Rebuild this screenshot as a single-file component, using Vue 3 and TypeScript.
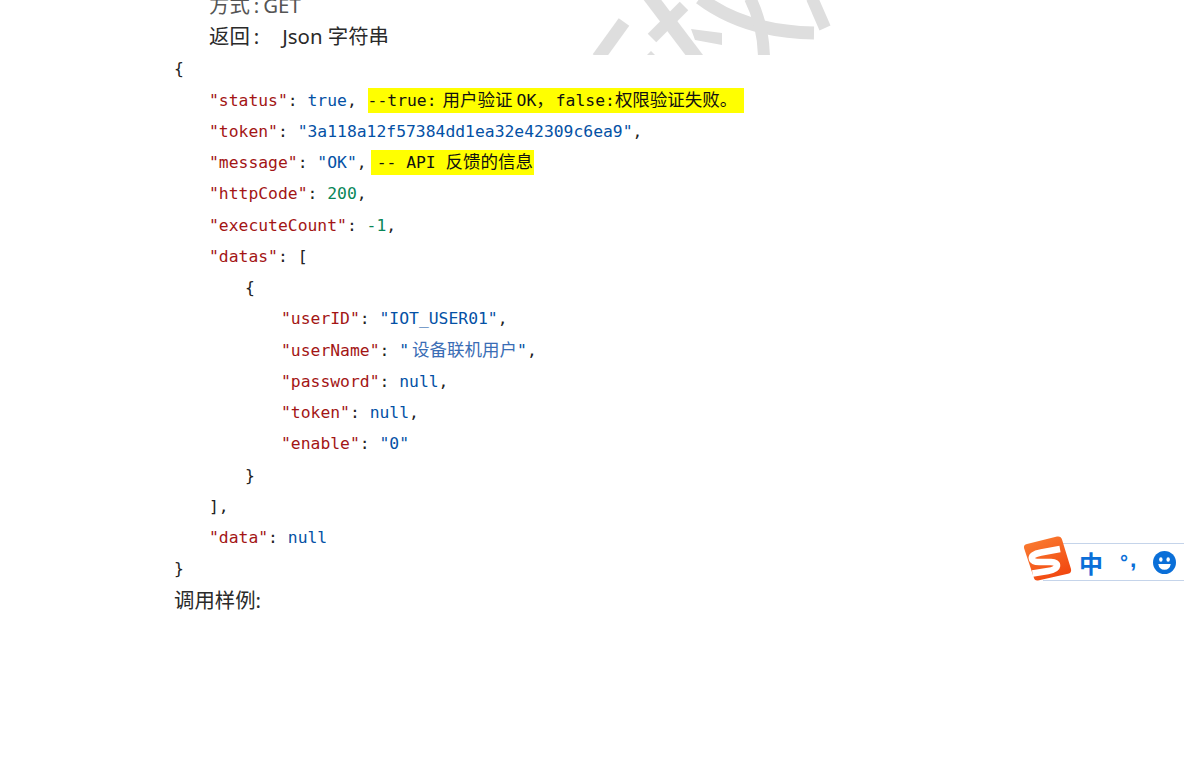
<script setup lang="ts">
type Seg = { t: string; c: string }
type Line = { indent: number; segs: Seg[]; mark?: Seg[]; markClass?: string }
const L = (indent: number, ...segs: [string, string][]): Line => ({
  indent,
  segs: segs.map(([t, c]) => ({ t, c })),
})
const status = L(1, ['"status"', 'k'], [': ', 'p'], ['true', 's'], [', ', 'p'])
status.markClass = 'h1'
status.mark = [
  { t: '--true:', c: '' },
  { t: '用户验证', c: 'cj gap6' },
  { t: 'OK', c: 'gap4' },
  { t: '，', c: 'cj' },
  { t: 'false:', c: 'gap2' },
  { t: '权限验证失败。', c: 'cj' },
]
const message = L(1, ['"message"', 'k'], [': ', 'p'], ['"OK"', 's'], [',', 'p'])
message.markClass = 'h2'
message.mark = [
  { t: '-- API ', c: '' },
  { t: '反馈的信息', c: 'cj' },
]
const lines: Line[] = [
  L(0, ['{', 'p']),
  status,
  L(1, ['"token"', 'k'], [': ', 'p'], ['"3a118a12f57384dd1ea32e42309c6ea9"', 's'], [',', 'p']),
  message,
  L(1, ['"httpCode"', 'k'], [': ', 'p'], ['200', 'n'], [',', 'p']),
  L(1, ['"executeCount"', 'k'], [': ', 'p'], ['-1', 'n'], [',', 'p']),
  L(1, ['"datas"', 'k'], [': [', 'p']),
  L(2, ['{', 'p']),
  L(3, ['"userID"', 'k'], [': ', 'p'], ['"IOT_USER01"', 's'], [',', 'p']),
  L(3, ['"userName"', 'k'], [': ', 'p'], ['"', 's'], ['设备联机用户', 's cj lite gap3'], ['"', 's'], [',', 'p']),
  L(3, ['"password"', 'k'], [': ', 'p'], ['null', 's'], [',', 'p']),
  L(3, ['"token"', 'k'], [': ', 'p'], ['null', 's'], [',', 'p']),
  L(3, ['"enable"', 'k'], [': ', 'p'], ['"0"', 's']),
  L(2, ['}', 'p']),
  L(1, ['],', 'p']),
  L(1, ['"data"', 'k'], [': ', 'p'], ['null', 's']),
  L(0, ['}', 'p']),
]
</script>

<template>
  <div class="page">
    <svg class="mark" width="270" height="55" viewBox="0 0 270 55">
      <g fill="none" stroke="#dedede" stroke-width="13">
        <path d="M44 22 L18 58" />
        <path d="M68 -6 L118 60" stroke-width="14" />
        <path d="M104 6 L72 38" stroke-width="12" />
        <path d="M120 -2 Q165 32 234 33" />
        <path d="M170 -2 Q184 26 184 60" stroke-width="12" />
        <path d="M232 -2 L245 28" stroke-width="12" />
      </g>
      <path d="M111 29 L142 33 L142 45 L115 40 Z" fill="#dedede" />
      <path d="M67 55 L71 51 L75 55 Z" fill="#dedede" />
    </svg>
    <div class="doc">
      <p class="row text ind1 faded">方式<span class="colon">:</span><span class="get">GET</span></p>
      <p class="row text ind1 ret">返回<span class="colon">:</span><span class="json">Json 字符串</span></p>
      <p v-for="(l, i) in lines" :key="i" class="row code" :class="'ind' + l.indent">
        <span v-for="(seg, j) in l.segs" :key="j" :class="seg.c">{{ seg.t }}</span>
        <span v-if="l.mark" class="h" :class="l.markClass">
          <span v-for="(seg, j) in l.mark" :key="j" :class="seg.c">{{ seg.t }}</span>
        </span>
      </p>
      <p class="row text">调用样例:</p>
    </div>
    <div class="ime">
      <svg class="logo" width="50" height="48" viewBox="0 0 50 48">
        <defs>
          <linearGradient id="sg" x1="0.200" y1="0" x2="0.700" y2="1">
            <stop offset="0" stop-color="#fa7d32" />
            <stop offset="1" stop-color="#f1450e" />
          </linearGradient>
        </defs>
        <path d="M1 13 Q.5 9.500 4 9 L34 1.500 Q38 .8 39 4.500 L48 34 Q48.800 38 45 38.800 L15 45.500 Q11.500 46 10.800 42.500 Z" fill="url(#sg)" />
        <path d="M37 14 L18 17.500 Q7.500 19.500 9 24 Q10 27.500 18 27 L28 27 Q34.500 27.500 34 31 Q33.500 34.500 25 36 L9.500 38.500" fill="none" stroke="#fff" stroke-width="6.500" />
      </svg>
      <div class="bar">
        <span class="zh">中</span>
        <span class="dot">°</span>
        <span class="comma">,</span>
        <svg class="face" width="23" height="23" viewBox="0 0 24 24">
          <circle cx="12" cy="12" r="12" fill="#0a6fd8" />
          <ellipse cx="8.200" cy="8.800" rx="1.800" ry="2.400" fill="#fff" />
          <ellipse cx="15.800" cy="8.800" rx="1.800" ry="2.400" fill="#fff" />
          <path d="M5.500 13.500 H18.500 Q17.500 19.500 12 19.500 Q6.500 19.500 5.500 13.500 Z" fill="#fff" />
        </svg>
      </div>
    </div>
  </div>
</template>

<style>
html, body { margin: 0; background: #fff; overflow: hidden; }
</style>

<style scoped>
.page { position: relative; width: 1184px; height: 772px; overflow: hidden; background: #fff; }
.doc { position: relative; padding: 0 0 0 174px; margin-top: -10px; }
.row { margin: 0; height: 31.250px; line-height: 31.200px; white-space: pre; }
.ret { height: 32.200px; }
.text { font-family: "Noto Sans", "Noto Sans CJK SC", sans-serif; font-size: 20.400px; color: #2a2a2a; }
.faded { color: #555; }
.colon { margin-left: 4px; }
.json { margin-left: 23px; }
.get { margin-left: 4px; }
.code { font-family: "DejaVu Sans Mono", "Noto Sans CJK SC", monospace; font-size: 16.380px; color: #222; }
.ind1 { padding-left: 35px; }
.ind2 { padding-left: 71px; }
.ind3 { padding-left: 107px; }
.k { color: #a31515; }
.s { color: #0451a5; }
.n { color: #098658; }
.p { color: #222; }
.h { background: #ffff00; color: #111; padding: 3px 0; }
.h1 { margin-left: 1px; padding-right: 7px; }
.h2 { margin-left: 4px; padding-left: 6px; padding-right: 1px; }
.cj { font-size: 17.500px; }
.lite { color: #3a6db5; }
.gap6 { margin-left: 6px; }
.gap4 { margin-left: 4px; }
.gap3 { margin-left: 3px; }
.gap2 { margin-left: 2px; }
.mark { position: absolute; left: 580px; top: 0; }
.ime { position: absolute; left: 1023px; top: 535px; width: 161px; height: 48px; }
.logo { position: absolute; left: 0; top: 0; z-index: 1; }
.bar {
  position: absolute; left: 20px; right: 0; top: 8px; height: 38px;
  border-top: 1px solid #c5d4ea; border-bottom: 1px solid #c5d4ea;
  box-sizing: border-box; background: #fff; color: #0a6fd8;
  display: flex; align-items: center; padding-left: 36px;
}
.zh { font: 700 24px "Noto Sans CJK SC", sans-serif; width: 41px; }
.dot { font: 700 20px "Liberation Sans", sans-serif; width: 10px; }
.comma { font: 700 23px "Liberation Sans", sans-serif; width: 23px; margin-top: -6px; }
.face { flex: none; }
</style>
